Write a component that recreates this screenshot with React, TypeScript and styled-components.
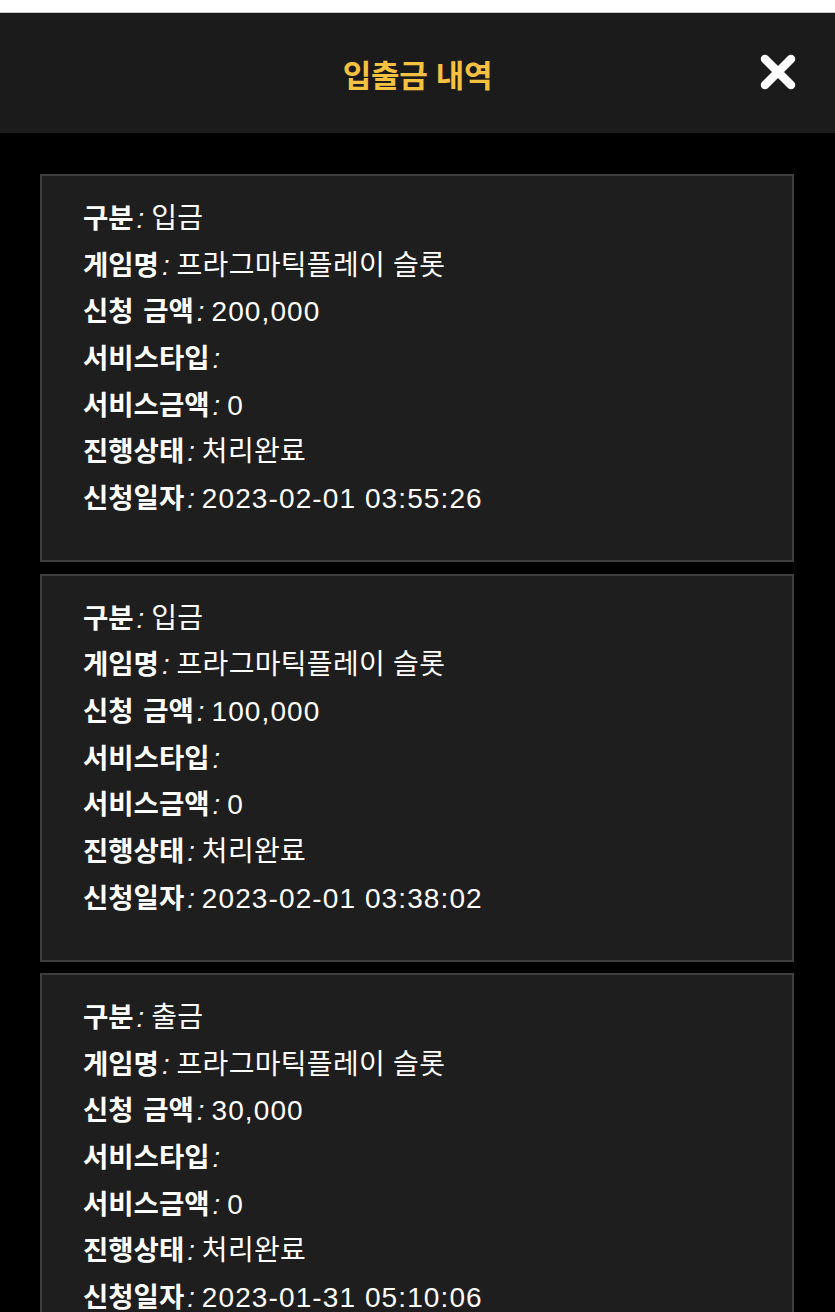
import React from 'react';
import styled, { createGlobalStyle } from 'styled-components';

const GlobalStyle = createGlobalStyle`
  html, body {
    margin: 0;
    padding: 0;
    background: #000000;
  }
  body {
    font-family: "Liberation Sans", "Noto Sans CJK KR", sans-serif;
    color: #ffffff;
  }
`;

type Entry = {
  kind: string;
  amount: string;
  date: string;
};

const entries: Entry[] = [
  { kind: '입금', amount: '200,000', date: '2023-02-01 03:55:26' },
  { kind: '입금', amount: '100,000', date: '2023-02-01 03:38:02' },
  { kind: '출금', amount: '30,000', date: '2023-01-31 05:10:06' },
];

const TopStrip = styled.div`
  height: 12px;
  background: #ffffff;
  border-bottom: 1px solid #c8c8c8;
`;

const Header = styled.header`
  position: relative;
  height: 120px;
  background: #1b1b1b;
  display: flex;
  align-items: center;
  justify-content: center;
`;

const Title = styled.h1`
  margin: 0;
  font-size: 31px;
  font-weight: 700;
  color: #f4c140;
  letter-spacing: -0.3px;
`;

const CloseButton = styled.button`
  position: absolute;
  right: 38px;
  top: 40px;
  width: 38px;
  height: 38px;
  padding: 0;
  border: 0;
  background: transparent;
  cursor: pointer;
  display: flex;
  align-items: center;
  justify-content: center;
`;

const List = styled.main`
  padding: 41px 41px 0 40px;
  display: flex;
  flex-direction: column;
  gap: 11.5px;
`;

const Card = styled.section`
  background: #1e1e1e;
  border: 2px solid #3e3e3e;
  padding: 20px 41px 38px;
  height: 388px;
  box-sizing: border-box;
`;

const Row = styled.div`
  font-size: 27.5px;
  line-height: 46.67px;
  white-space: nowrap;
`;

const Label = styled.span`
  font-weight: 700;
  word-spacing: 2px;
`;

const Colon = styled.i`
  font-weight: 400;
  margin: 0 7px 0 3px;
`;

const Value = styled.span<{ $numeric?: boolean }>`
  font-weight: 400;
  font-size: 28px;
  letter-spacing: ${(p) => (p.$numeric ? '1.1px' : '0.3px')};
`;

const Field: React.FC<{ label: string; value?: string }> = ({ label, value }) => (
  <Row>
    <Label>{label}</Label>
    <Colon>:</Colon>
    {value && <Value $numeric={/^[0-9,:\- ]+$/.test(value)}>{value}</Value>}
  </Row>
);

const App: React.FC = () => {
  return (
    <>
      <GlobalStyle />
      <TopStrip />
      <Header>
        <Title>입출금 내역</Title>
        <CloseButton aria-label="닫기">
          <svg width="36" height="36" viewBox="0 0 36 36">
            <path d="M5 5 L31 31 M31 5 L5 31" stroke="#ffffff" strokeWidth="8.5" strokeLinecap="round" />
          </svg>
        </CloseButton>
      </Header>
      <List>
        {entries.map((e, i) => (
          <Card key={i}>
            <Field label="구분" value={e.kind} />
            <Field label="게임명" value="프라그마틱플레이 슬롯" />
            <Field label="신청 금액" value={e.amount} />
            <Field label="서비스타입" />
            <Field label="서비스금액" value="0" />
            <Field label="진행상태" value="처리완료" />
            <Field label="신청일자" value={e.date} />
          </Card>
        ))}
      </List>
    </>
  );
};

export default App;
